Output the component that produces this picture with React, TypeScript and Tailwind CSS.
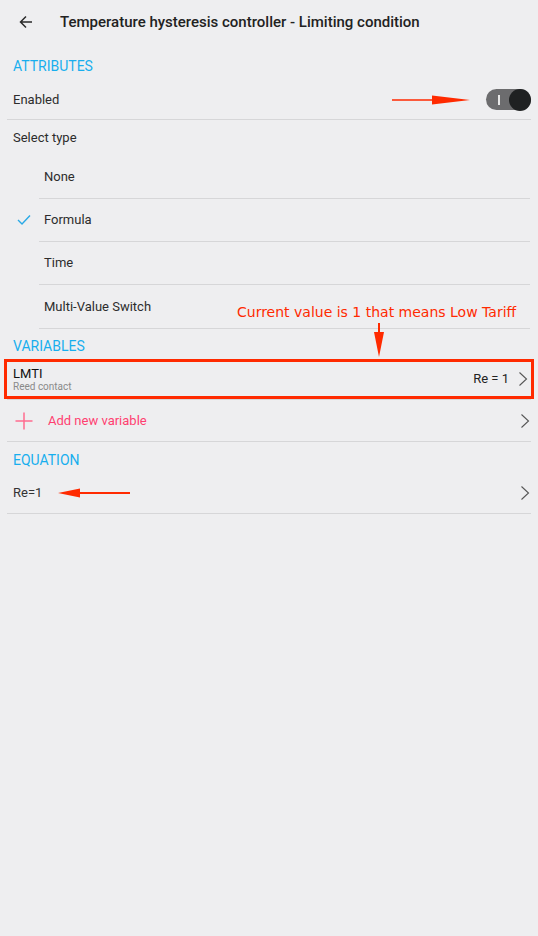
import React from "react";

const cyan = "text-[#18aeee]";

function Chevron() {
  return (
    <svg width="10" height="16" viewBox="0 0 10 16" className="shrink-0">
      <path d="M1.5 1.5 L8.5 8 L1.5 14.5" fill="none" stroke="#555" strokeWidth="1.1" />
    </svg>
  );
}

function SectionHeader({ label, className }: { label: string; className: string }) {
  return (
    <div className={`flex items-center px-[13px] text-[14px] ${cyan} ${className}`}>{label}</div>
  );
}

function TypeOption({ label, checked }: { label: string; checked?: boolean }) {
  return (
    <div className="ml-[39px] mr-[8px] flex h-[43px] items-center border-b border-[#d6d6d8] last:border-b-0">
      <div className="relative flex h-full items-center pl-[5px] text-[13px] text-[#2c2c2c]">
        {checked && (
          <svg width="14" height="12" viewBox="0 0 14 12" className="absolute left-[-22px] top-[15px]">
            <path d="M1 6 L5 10 L13 1.5" fill="none" stroke="#29a9e6" strokeWidth="1.4" />
          </svg>
        )}
        {label}
      </div>
    </div>
  );
}

export default function App() {
  return (
    <div className="relative min-h-[936px] w-full bg-[#eeeef0] font-['Roboto',sans-serif] text-[#2c2c2c]">
      {/* Toolbar */}
      <div className="flex h-[44px] items-center">
        <svg width="14" height="14" viewBox="0 0 14 14" className="ml-[19px]">
          <path d="M13 7 H1.5 M7 1.5 L1.5 7 L7 12.5" fill="none" stroke="#2a2a2a" strokeWidth="1.5" />
        </svg>
        <h1 className="ml-[27px] text-[15px] font-medium text-[#222]">
          Temperature hysteresis controller - Limiting condition
        </h1>
      </div>

      {/* Attributes */}
      <SectionHeader label="ATTRIBUTES" className="h-[36px] pt-[8px]" />
      <div className="mx-[7px] flex h-[40px] items-center justify-between border-b border-[#d6d6d8] pl-[6px]">
        <span className="text-[13px]">Enabled</span>
        <div className="relative flex h-[21px] w-[45px] items-center rounded-full bg-[#6c6c6e]">
          <span className="ml-[12px] h-[10px] w-[2px] bg-[#e8e8e8]" />
          <span className="absolute right-0 top-[-0.5px] h-[22px] w-[22px] rounded-full bg-[#1f2122]" />
        </div>
      </div>
      <div className="flex h-[36px] items-center px-[13px] text-[13px]">Select type</div>
      <div className="flex flex-col">
        <TypeOption label="None" />
        <TypeOption label="Formula" checked />
        <TypeOption label="Time" />
        <TypeOption label="Multi-Value Switch" />
      </div>
      <div className="ml-[39px] mr-[8px] border-b border-[#d6d6d8]" />

      {/* Variables */}
      <SectionHeader label="VARIABLES" className="h-[30px] pt-[4px]" />
      <div className="mx-[4px] flex h-[40px] items-center justify-between border-[3px] border-[#ff2a00] pl-[6px] pr-[3px]">
        <div className="flex flex-col leading-none">
          <span className="text-[13px] text-[#111]">LMTI</span>
          <span className="mt-[2px] text-[10px] text-[#8a8a8a]">Reed contact</span>
        </div>
        <div className="flex items-center gap-[9px]">
          <span className="text-[13px] text-[#222]">Re = 1</span>
          <Chevron />
        </div>
      </div>
      <div className="mx-[7px] border-b border-[#d6d6d8]" />
      <div className="mx-[7px] flex h-[42px] items-center justify-between border-b border-[#d6d6d8] pr-[1px]">
        <div className="flex items-center">
          <svg width="18" height="18" viewBox="0 0 18 18" className="ml-[8px]">
            <path d="M9 0.5 V17.5 M0.5 9 H17.5" fill="none" stroke="#ff6c8f" strokeWidth="1.5" />
          </svg>
          <span className="ml-[15px] text-[13px] text-[#ff3f70]">Add new variable</span>
        </div>
        <Chevron />
      </div>

      {/* Equation */}
      <SectionHeader label="EQUATION" className="h-[31px] pt-[6px]" />
      <div className="mx-[7px] flex h-[41px] items-center justify-between border-b border-[#d6d6d8] pl-[6px] pr-[1px]">
        <span className="text-[13px] text-[#333]">Re=1</span>
        <Chevron />
      </div>

      {/* Annotations */}
      <span className="absolute left-[237px] top-[302px] font-['DejaVu_Sans',sans-serif] text-[14px] whitespace-nowrap text-[#ff2a00]">
        Current value is 1 that means Low Tariff
      </span>
      <svg className="absolute left-[372px] top-[323px]" width="14" height="36" viewBox="0 0 14 36">
        <path d="M6 0 H8 V9 H12 L7 34 L2 9 H6 Z" fill="#ff2a00" />
      </svg>
      <svg className="absolute left-[390px] top-[94px]" width="82" height="12" viewBox="0 0 82 12">
        <path d="M2 5.2 H42 L42 1.5 L80 6 L42 10.5 L42 6.8 H2 Z" fill="#ff2a00" />
      </svg>
      <svg className="absolute left-[56px] top-[487px]" width="76" height="12" viewBox="0 0 76 12">
        <path d="M2 6 L24 1.5 L24 5 H74 V7 H24 L24 10.5 Z" fill="#ff2a00" />
      </svg>
    </div>
  );
}
